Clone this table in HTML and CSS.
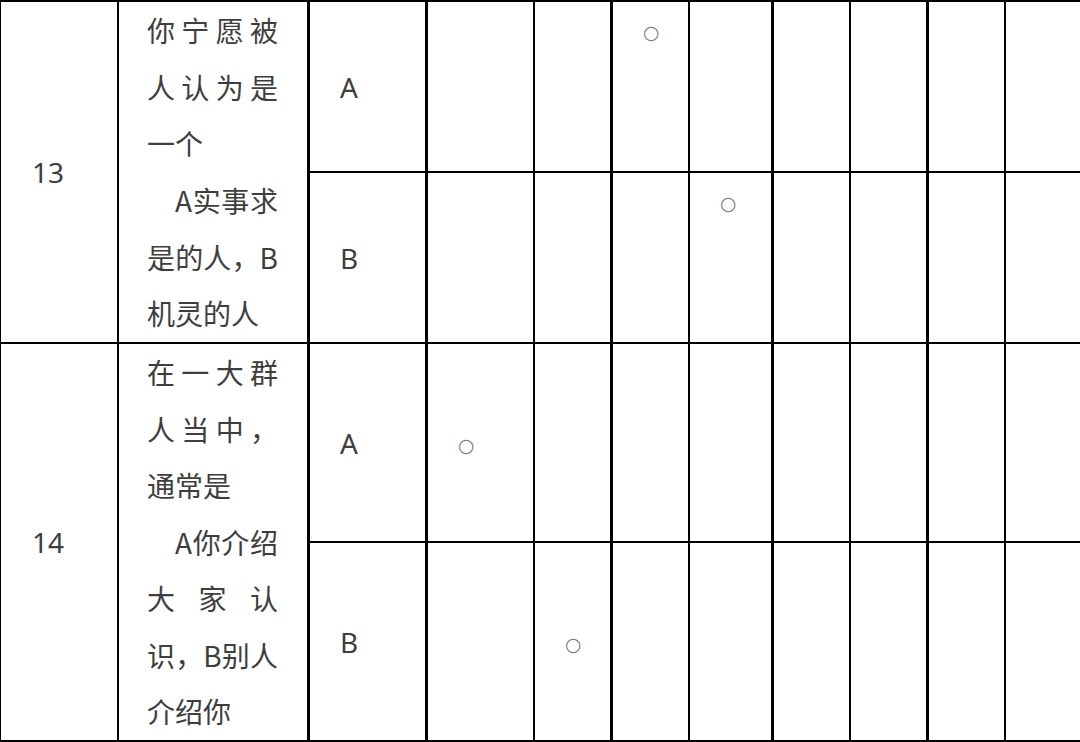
FILE: index.html
```html
<!DOCTYPE html>
<html lang="zh-CN">
<head>
<meta charset="utf-8">
<title>问卷表格</title>
<link rel="stylesheet" href="styles.css">
</head>
<body>
<div class="sheet">
  <div class="cell edge num span2">13</div>
  <div class="cell thin question span2">
    <p>你宁愿被人认为是一个</p>
    <p class="opt">A实事求是的人，B机灵的人</p>
  </div>
  <div class="cell thick choice">A</div>
  <div class="cell thick"></div>
  <div class="cell thin"></div>
  <div class="cell thick mark top"><span class="ring">○</span></div>
  <div class="cell thin"></div>
  <div class="cell thick"></div>
  <div class="cell thin"></div>
  <div class="cell thick"></div>
  <div class="cell thin"></div>

  <div class="cell thick choice">B</div>
  <div class="cell thick"></div>
  <div class="cell thin"></div>
  <div class="cell thick"></div>
  <div class="cell thin mark top"><span class="ring">○</span></div>
  <div class="cell thick"></div>
  <div class="cell thin"></div>
  <div class="cell thick"></div>
  <div class="cell thin"></div>

  <div class="cell edge num span2">14</div>
  <div class="cell thin question span2">
    <p>在一大群人当中，通常是</p>
    <p class="opt">A你介绍大家认识，B别人介绍你</p>
  </div>
  <div class="cell thick choice">A</div>
  <div class="cell thick mark mid"><span class="ring">○</span></div>
  <div class="cell thin"></div>
  <div class="cell thick"></div>
  <div class="cell thin"></div>
  <div class="cell thick"></div>
  <div class="cell thin"></div>
  <div class="cell thick"></div>
  <div class="cell thin"></div>

  <div class="cell thick choice">B</div>
  <div class="cell thick"></div>
  <div class="cell thin mark mid"><span class="ring">○</span></div>
  <div class="cell thick"></div>
  <div class="cell thin"></div>
  <div class="cell thick"></div>
  <div class="cell thin"></div>
  <div class="cell thick"></div>
  <div class="cell thin"></div>
</div>
</body>
</html>
```

FILE: styles.css
```css
html, body {
  margin: 0;
  padding: 0;
  background: #ffffff;
  overflow: hidden;
}

body {
  font-family: "Noto Sans", "Noto Sans CJK SC", sans-serif;
  font-size: 28px;
  color: #3e3e3e;
}

.sheet {
  display: grid;
  grid-template-columns: 117px 190px 118px 108px 77px 78px 83px 78px 77px 78px 76px;
  grid-template-rows: 171px 171px 199px 199px;
  width: 1080px;
  border-bottom: 2px solid #000;
}

.cell {
  box-sizing: border-box;
  border-top: 2px solid #000;
  min-width: 0;
}

.edge { border-left: 1px solid #000; }
.thin { border-left: 2px solid #000; }
.thick { border-left: 3px solid #000; }

.span2 { grid-row: span 2; }

.num {
  display: flex;
  align-items: center;
  padding-left: 31px;
  line-height: 1;
}

.question {
  display: flex;
  flex-direction: column;
  justify-content: center;
  padding: 0 29px 0 28px;
  line-height: 56.6px;
  text-align: justify;
  font-family: "Noto Sans CJK SC", sans-serif;
}

.question p {
  margin: 0;
}

.question .opt {
  text-indent: 1em;
}

.choice {
  display: flex;
  align-items: center;
  padding-left: 30px;
  line-height: 1;
}

.mark {
  display: flex;
  padding-left: 30px;
}

.mark.top {
  align-items: flex-start;
  padding-top: 2px;
}

.mark.mid {
  align-items: center;
  padding-top: 5px;
}

.ring {
  font-family: "DejaVu Sans", sans-serif;
  font-size: 19px;
  line-height: 57px;
  color: #7a7a7a;
}
```
